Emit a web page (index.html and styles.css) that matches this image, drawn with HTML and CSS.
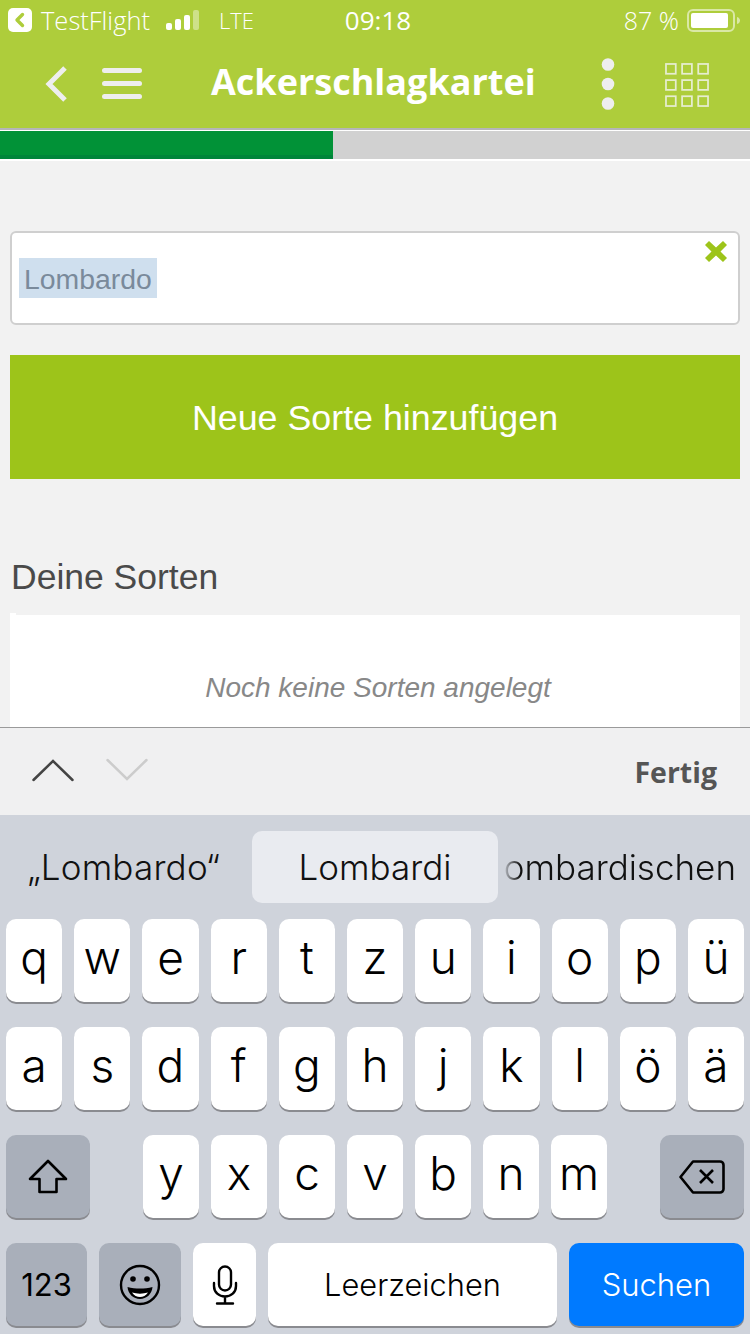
FILE: index.html
```html
<!DOCTYPE html>
<html lang="de">
<head>
<meta charset="utf-8">
<title>Ackerschlagkartei</title>
<link rel="stylesheet" href="styles.css">
</head>
<body>
<div class="app">
  <div class="status">
    <div class="status-left">
      <svg class="tf-badge" width="24" height="24" viewBox="0 0 24 24"><rect width="24" height="24" rx="5" fill="#fff"/><path d="M14.500 6.500 9 12l5.500 5.500" fill="none" stroke="#aecd3b" stroke-width="3.400" stroke-linecap="round" stroke-linejoin="round"/></svg>
      <span class="tf-name">TestFlight</span>
      <svg class="signal" width="33" height="20" viewBox="0 0 33 20"><rect x="0" y="13" width="6" height="7" rx="2" fill="#fff"/><rect x="9" y="9" width="6" height="11" rx="2" fill="#fff"/><rect x="18" y="5" width="6" height="15" rx="2" fill="#fff"/><rect x="27" y="0" width="6" height="20" rx="2" fill="#fff" fill-opacity=".4"/></svg>
      <span class="lte">LTE</span>
    </div>
    <div class="status-time">09:18</div>
    <div class="status-right">
      <span class="pct">87 %</span>
      <svg class="battery" width="53" height="23" viewBox="0 0 53 23"><rect x="1" y="1" width="46" height="21" rx="5" fill="none" stroke="#fff" stroke-opacity=".55" stroke-width="2"/><rect x="4" y="4" width="37" height="15" rx="2" fill="#fff"/><path d="M50 8c2 .5 3 2 3 3.500s-1 3-3 3.500z" fill="#fff" fill-opacity=".55"/></svg>
    </div>
  </div>
  <header class="topbar">
    <svg class="back" width="24" height="38" viewBox="0 0 24 38"><path d="M21 3 5 19l16 16" fill="none" stroke="#eeeeee" stroke-width="5"/></svg>
    <svg class="menu" width="40" height="31" viewBox="0 0 40 31"><rect y="0" width="40" height="5" rx="2.500" fill="#eee"/><rect y="13" width="40" height="5" rx="2.500" fill="#eee"/><rect y="26" width="40" height="5" rx="2.500" fill="#eee"/></svg>
    <h1 class="title">Ackerschlagkartei</h1>
    <svg class="dots" width="14" height="52" viewBox="0 0 14 52"><circle cx="7" cy="6.500" r="6.300" fill="#eee"/><circle cx="7" cy="26" r="6.300" fill="#eee"/><circle cx="7" cy="45.500" r="6.300" fill="#eee"/></svg>
    <svg class="grid" width="44" height="44" viewBox="0 0 45 45" fill="none" stroke="#e6edd0" stroke-width="1.800"><rect x="1" y="1" width="10" height="10"/><rect x="17.500" y="1" width="10" height="10"/><rect x="34" y="1" width="10" height="10"/><rect x="1" y="17.500" width="10" height="10"/><rect x="17.500" y="17.500" width="10" height="10"/><rect x="34" y="17.500" width="10" height="10"/><rect x="1" y="34" width="10" height="10"/><rect x="17.500" y="34" width="10" height="10"/><rect x="34" y="34" width="10" height="10"/></svg>
  </header>
  <div class="progress"><div class="progress-fill"></div></div>

  <main class="content">
    <div class="field">
      <span class="selection">Lombardo</span>
      <svg class="clear" width="22" height="21" viewBox="0 0 22 21"><path d="M4 0l7 6.500L18 0l4 4-6.500 6.500L22 17l-4 4-7-6.500L4 21l-4-4 6.500-6.500L0 4z" fill="#9dc41a"/></svg>
    </div>
    <button class="add">Neue Sorte hinzufügen</button>
    <h2 class="section">Deine Sorten</h2>
    <div class="panel"><p class="empty">Noch keine Sorten angelegt</p></div>
  </main>

  <div class="accessory">
    <svg class="chev" width="42" height="24" viewBox="0 0 42 24"><path d="M1.500 22 21 3l19.500 19" fill="none" stroke="#444" stroke-width="2.500" stroke-linecap="round"/></svg>
    <svg class="chev" width="42" height="24" viewBox="0 0 42 24"><path d="M1.500 2 21 21 40.500 2" fill="none" stroke="#ccc" stroke-width="2.500" stroke-linecap="round"/></svg>
    <span class="done">Fertig</span>
  </div>

  <section class="keyboard">
    <div class="suggest">
      <div class="sug sug-a">„Lombardo“</div>
      <div class="sug sug-b">Lombardi</div>
      <div class="sug sug-c"><span>Lombardischen</span></div>
    </div>
    <div class="row">
      <div class="key">q</div><div class="key">w</div><div class="key">e</div><div class="key">r</div><div class="key">t</div><div class="key">z</div><div class="key">u</div><div class="key">i</div><div class="key">o</div><div class="key">p</div><div class="key">ü</div>
    </div>
    <div class="row">
      <div class="key">a</div><div class="key">s</div><div class="key">d</div><div class="key">f</div><div class="key">g</div><div class="key">h</div><div class="key">j</div><div class="key">k</div><div class="key">l</div><div class="key">ö</div><div class="key">ä</div>
    </div>
    <div class="row row-3">
      <div class="key fn wide">
        <svg width="40" height="36" viewBox="0 0 40 36"><path d="M20 2 38 20H28.500v13h-17V20H2z" fill="none" stroke="#000" stroke-width="2.600" stroke-linejoin="round"/></svg>
      </div>
      <div class="letters">
        <div class="key">y</div><div class="key">x</div><div class="key">c</div><div class="key">v</div><div class="key">b</div><div class="key">n</div><div class="key">m</div>
      </div>
      <div class="key fn wide">
        <svg width="46" height="34" viewBox="0 0 46 34"><path d="M14 1.500h27a3.500 3.500 0 0 1 3.500 3.500v24a3.500 3.500 0 0 1-3.500 3.500H14L1.500 17z" fill="none" stroke="#000" stroke-width="2.600" stroke-linejoin="round"/><path d="m21 10 13 13m0-13L21 23" fill="none" stroke="#000" stroke-width="2.600"/></svg>
      </div>
    </div>
    <div class="row row-4">
      <div class="key fn k123">123</div>
      <div class="key fn kemoji">
        <svg width="42" height="42" viewBox="0 0 42 42"><circle cx="21" cy="21" r="19" fill="none" stroke="#000" stroke-width="2.400"/><circle cx="14" cy="15" r="2.800"/><circle cx="28" cy="15" r="2.800"/><path d="M8.500 23c8 2 17 2 25 0-.5 7-6 12-12.500 12S9 30 8.500 23z"/><path d="M13 28.500c5 1.500 11 1.500 16 0-2 3-5 4.500-8 4.500s-6-1.500-8-4.500z" fill="#fff"/></svg>
      </div>
      <div class="key kmic">
        <svg width="26" height="40" viewBox="0 0 26 40"><rect x="7" y="1.500" width="12" height="24" rx="6" fill="none" stroke="#000" stroke-width="2.400"/><path d="M2 18v3c0 6.500 5 10.500 11 10.500S24 27.500 24 21v-3M13 31.500V38M5 38.500h16" fill="none" stroke="#000" stroke-width="2.400" stroke-linecap="round"/></svg>
      </div>
      <div class="key kspace">Leerzeichen</div>
      <div class="key ksearch">Suchen</div>
    </div>
  </section>
</div>
</body>
</html>
```
FILE: styles.css
```css
* { box-sizing: border-box; }
html, body { margin: 0; padding: 0; }
body { background: #f2f2f2; }
.app {
  width: 750px;
  height: 1334px;
  overflow: hidden;
  display: flex;
  flex-direction: column;
  font-family: "Liberation Sans", Arial, sans-serif;
}

/* status bar */
.status {
  height: 41px;
  background: #aecd3b;
  color: #fff;
  display: grid;
  grid-template-columns: 1fr auto 1fr;
  align-items: center;
  padding: 0 2px 1px 8px;
  font-family: "Open Sans", sans-serif;
  font-size: 25px;
  flex: none;
}
.status-left, .status-right { display: flex; align-items: center; }
.status-right { justify-content: flex-end; }
.tf-name { margin-left: 9px; font-weight: 300; font-size: 25.500px; }
.signal { margin-left: 16px; }
.lte { margin-left: 20px; font-weight: 300; font-size: 22px; }
.status-time { font-weight: 400; font-size: 26px; }
.pct { font-weight: 300; margin-right: 8px; }
.battery { margin-right: 8px; }

/* header */
.topbar {
  height: 87px;
  background: #aecd3b;
  display: flex;
  align-items: center;
  padding-left: 44px;
  padding-bottom: 2px;
  flex: none;
}
.menu { margin-left: 34px; }
.title {
  margin: 0 0 4px 69px;
  width: 323px;
  white-space: nowrap;
  font-family: "Open Sans", sans-serif;
  font-weight: 700;
  font-size: 36px;
  color: #fff;
  line-height: 44px;
}
.dots { margin: 1px 0 0 67px; }
.grid { margin: 3px 0 0 50px; }

/* progress */
.progress {
  height: 33px;
  flex: none;
  padding: 3px 0 2px;
  background: linear-gradient(#b5b5b8 0 2px, #fff 2px 3px, #d1d1d1 3px 31px, #fff 31px);
}
.progress-fill {
  width: 333px;
  height: 100%;
  background: #019237;
  border-bottom: 4px solid #00853a;
}

/* content */
.content {
  flex: 1;
  min-height: 0;
  overflow: hidden;
  padding: 70px 10px 0;
  background: #f2f2f2;
}
.field {
  position: relative;
  height: 94px;
  background: #fff;
  border: 2px solid #cfcfcf;
  border-radius: 6px;
  padding: 25px 0 0 7px;
}
.selection {
  display: inline-block;
  height: 40px;
  padding: 0 5px;
  width: 138px;
  background: #cfdfee;
  color: #7a8a9b;
  font-size: 28.400px;
  line-height: 42px;
  white-space: nowrap;
}
.clear { position: absolute; top: 8px; right: 11px; }
.add {
  display: block;
  width: 100%;
  height: 124px;
  margin-top: 30px;
  border: 0;
  background: #9dc41a;
  color: #fff;
  font-family: "Liberation Sans", Arial, sans-serif;
  font-size: 35.800px;
  padding: 2px 0 0;
}
.section {
  margin: 78px 0 18px 1px;
  font-size: 35.500px;
  font-weight: 400;
  line-height: 40px;
  color: #4a4a4a;
}
.panel { position: relative; background: #fff; height: 160px; padding-top: 56px; }
.panel::before {
  content: "";
  position: absolute;
  top: -2px;
  left: 0;
  width: 6px;
  height: 2px;
  background: #fff;
}
.empty {
  margin: 0;
  padding-left: 6px;
  text-align: center;
  font-style: italic;
  font-size: 28px;
  line-height: 34px;
  color: #888;
}

/* accessory */
.accessory {
  height: 88px;
  flex: none;
  background: #f0f0f1;
  border-top: 1px solid #9a9a9a;
  display: flex;
  align-items: center;
  padding: 0 33px 0 32px;
  gap: 32px;
}
.chev { margin-bottom: 3px; }
.done {
  margin-left: auto;
  font-family: "Open Sans", sans-serif;
  font-weight: 700;
  font-size: 28.500px;
  color: #555;
}

/* keyboard */
.keyboard {
  height: 519px;
  flex: none;
  background: #cfd3db;
  font-family: Inter, sans-serif;
  color: #000;
}
.suggest {
  height: 104px;
  display: flex;
  padding-top: 16px;
  font-size: 35px;
  font-weight: 300;
  color: #111;
}
.sug { height: 72px; display: flex; align-items: center; justify-content: center; white-space: nowrap; }
.sug-a { width: 252px; padding-right: 5px; letter-spacing: .2px; }
.sug-b { width: 246px; background: #e9ebf0; border-radius: 10px; }
.sug-c {
  width: 238px;
  justify-content: flex-end;
  overflow: hidden;
  -webkit-mask-image: linear-gradient(90deg, transparent 4px, #000 22px);
  mask-image: linear-gradient(90deg, transparent 4px, #000 22px);
}
.row {
  display: flex;
  gap: 12px;
  padding: 0 6px;
  height: 84px;
  margin-bottom: 24px;
}
.key {
  flex: 1;
  height: 83px;
  background: #fff;
  border-radius: 10px;
  box-shadow: 0 2px 0 #8a8b90;
  display: flex;
  align-items: center;
  justify-content: center;
  font-size: 46px;
  font-weight: 300;
  padding-bottom: 8px;
}
.row-3 { justify-content: space-between; }
.letters { display: flex; gap: 12px; }
.letters .key { flex: none; width: 56px; }
.wide { flex: none; width: 84px; }
.fn { background: #a9afba; padding-bottom: 0; }
.row-4 .key { flex: none; padding-bottom: 0; font-size: 30.800px; font-weight: 300; }
.row-4 .k123 { width: 81px; font-size: 31px; font-weight: 400; }
.kemoji { width: 82px; }
.kmic { width: 63px; }
.kspace { width: 289px; }
.row-4 .ksearch { width: 175px; background: #007aff; color: #fff; font-size: 31px; }
```
